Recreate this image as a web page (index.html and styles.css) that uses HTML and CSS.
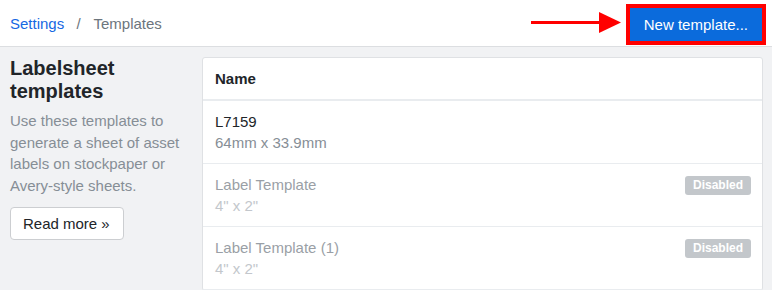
FILE: index.html
```html
<!DOCTYPE html>
<html>

<head>
    <title>Templates</title>
    <meta charset="utf-8">
    <link rel="stylesheet" href="styles.css">
</head>

<body>
    <div class='topbar'>
        <div class='crumbs'>
            <a href='#'>Settings</a>
            <span class='sep'>/</span>
            <span class='current'>Templates</span>
        </div>
        <div class='actions'>
            <svg class='arrow' width='92' height='22' viewBox='0 0 92 22'>
                <rect x='0' y='9' width='70' height='3' fill='#f00'/>
                <polygon points='68,0 90,10.5 68,21' fill='#f00'/>
            </svg>
            <span class='highlight'>
                <a href='#' class='btn-primary'>New template...</a>
            </span>
        </div>
    </div>

    <div class='page'>
        <div class='intro'>
            <h2>Labelsheet templates</h2>
            <p>Use these templates to generate a sheet of asset labels on stockpaper or Avery-style sheets.</p>
            <a href='#' class='btn-default'>Read more &raquo;</a>
        </div>

        <div class='card'>
            <div class='card-head'>Name</div>
            <div class='row'>
                <div>
                    <div class='title'>L7159</div>
                    <div class='size'>64mm x 33.9mm</div>
                </div>
            </div>
            <div class='row disabled'>
                <div>
                    <div class='title'>Label Template</div>
                    <div class='size'>4" x 2"</div>
                </div>
                <span class='badge'>Disabled</span>
            </div>
            <div class='row disabled'>
                <div>
                    <div class='title'>Label Template (1)</div>
                    <div class='size'>4" x 2"</div>
                </div>
                <span class='badge'>Disabled</span>
            </div>
        </div>
    </div>
</body>

</html>
```

FILE: styles.css
```css
* {
    box-sizing: border-box;
}

body {
    margin: 0;
    background-color: #f1f2f4;
    font-family: "Liberation Sans", Arial, sans-serif;
    font-size: 15px;
    color: #212529;
    overflow: hidden;
}

a {
    text-decoration: none;
}

.topbar {
    display: flex;
    align-items: center;
    justify-content: space-between;
    height: 47px;
    padding: 0 6px 0 10px;
    background-color: #fff;
    border-bottom: 1px solid #dcdee1;
}

.crumbs {
    font-size: 15px;
    color: #6c757d;
}

.crumbs a {
    color: #1668e3;
}

.crumbs .sep {
    margin: 0 9px 0 8px;
}

.actions {
    position: relative;
    display: flex;
    align-items: center;
}

.arrow {
    position: absolute;
    left: -95px;
    top: 10px;
}

.highlight {
    display: block;
    margin-top: 2px;
    border: 4px solid #f00;
}

.btn-primary {
    display: block;
    height: 33px;
    line-height: 33px;
    padding: 0 14px;
    background-color: #0b6bdc;
    color: #fff;
    font-size: 15px;
}

.page {
    display: flex;
    gap: 22px;
    padding: 10px 9px 0 10px;
}

.intro {
    width: 170px;
    flex-shrink: 0;
}

.intro h2 {
    margin: 0;
    font-size: 20px;
    font-weight: 600;
    line-height: 23px;
    color: #212529;
}

.intro p {
    margin: 7px 0 11px 0;
    line-height: 21.5px;
    color: #868e96;
}

.btn-default {
    display: inline-block;
    height: 33px;
    line-height: 31px;
    padding: 0 13px 0 12px;
    background-color: #fff;
    border: 1px solid #ccced1;
    border-radius: 4px;
    color: #212529;
}

.card {
    flex: 1;
    background-color: #fff;
    border: 1px solid #dfe1e4;
    border-radius: 3px;
}

.card-head {
    height: 43px;
    line-height: 41px;
    padding: 0 12px;
    font-weight: bold;
    border-bottom: 2px solid #e9ecef;
}

.row {
    display: flex;
    justify-content: space-between;
    align-items: flex-start;
    height: 63px;
    padding: 10px 11px 0 12px;
    border-bottom: 1px solid #e9ecef;
    line-height: 21px;
}

.size {
    color: #868e96;
}

.row.disabled .title {
    color: #9a9fa6;
}

.row.disabled .size {
    color: #c3c7cc;
}

.badge {
    margin-top: 2px;
    padding: 0 8px;
    height: 19px;
    line-height: 19px;
    border-radius: 3px;
    background-color: #c3c7cb;
    color: #fff;
    font-size: 12px;
    font-weight: bold;
}
```
